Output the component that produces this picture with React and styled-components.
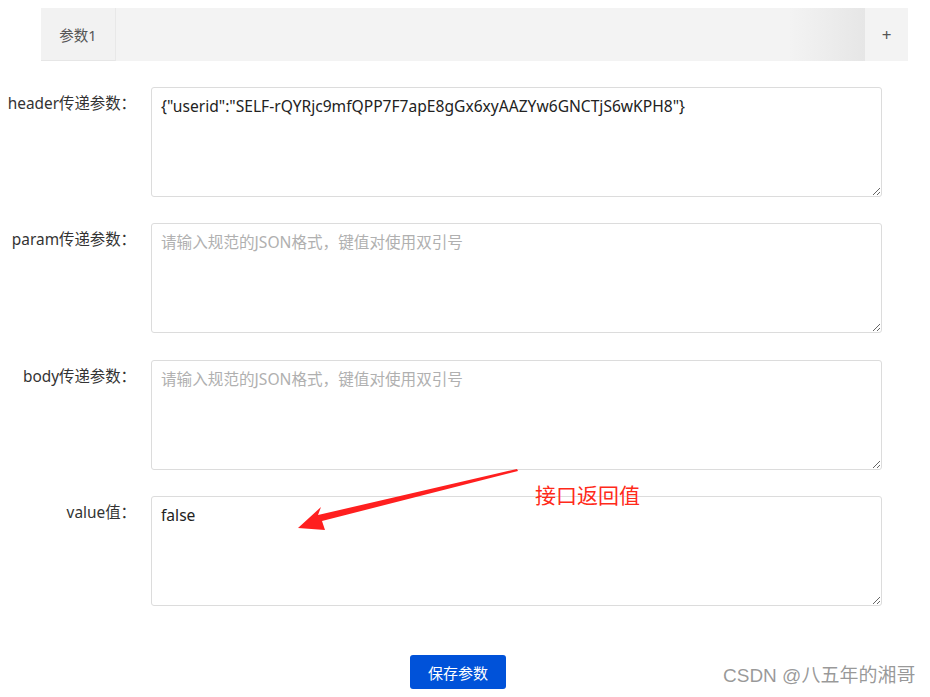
import styled, { createGlobalStyle } from 'styled-components';

const GlobalStyle = createGlobalStyle`
  body {
    margin: 0;
    background: #fff;
    font-family: "Noto Sans", "Noto Sans CJK SC", sans-serif;
  }
`;

const rows = [
  {
    label: 'header传递参数：',
    value: '{"userid":"SELF-rQYRjc9mfQPP7F7apE8gGx6xyAAZYw6GNCTjS6wKPH8"}',
  },
  { label: 'param传递参数：', value: '' },
  { label: 'body传递参数：', value: '' },
  { label: 'value值：', value: 'false' },
];

export default function App() {
  return (
    <Page>
      <GlobalStyle />
      <TabBar>
        <Tab>参数1</Tab>
        <TabSpace />
        <AddTab>+</AddTab>
      </TabBar>

      <Form>
        {rows.map((row) => (
          <Row key={row.label}>
            <Label>{row.label}</Label>
            <TextArea
              defaultValue={row.value}
              placeholder='请输入规范的JSON格式，键值对使用双引号'
            />
          </Row>
        ))}
        <ButtonWrapper>
          <Button>保存参数</Button>
        </ButtonWrapper>
      </Form>

      {/* annotation drawn over the screenshot */}
      <Arrow width='930' height='697' viewBox='0 0 930 697'>
        <polygon
          points='517,469 318,515 321,507 298,528 325,530 322,521 518,471'
          fill='#ff1f1f'
        />
      </Arrow>
      <Note>接口返回值</Note>
      <Watermark>CSDN @八五年的湘哥</Watermark>
    </Page>
  );
}

const Page = styled.div`
  position: relative;
  width: 930px;
  height: 697px;
  padding-top: 8px;
  box-sizing: border-box;
  overflow: hidden;
`;
const TabBar = styled.div`
  display: flex;
  margin-left: 41px;
  width: 867px;
  height: 53px;
  background: #f3f3f3;
`;
const Tab = styled.div`
  width: 75px;
  display: flex;
  align-items: center;
  justify-content: center;
  font-size: 14.5px;
  color: #555;
  background: #f2f2f2;
  border-right: 1px solid #e8e8e8;
  border-bottom: 1px solid #e6e6e6;
  box-sizing: border-box;
`;
const TabSpace = styled.div`
  flex: 1;
  background: linear-gradient(
    to right,
    #f3f3f3 0%,
    #f3f3f3 90%,
    #e6e6e6 100%
  );
`;
const AddTab = styled.div`
  width: 43px;
  display: flex;
  align-items: center;
  justify-content: center;
  font-size: 17px;
  color: #555;
  background: #f3f3f3;
`;
const Form = styled.div`
  display: flex;
  flex-direction: column;
  gap: 26.3px;
  padding-top: 26px;
`;
const Row = styled.div`
  display: flex;
  align-items: flex-start;
`;
const Label = styled.label`
  width: 136px;
  margin-right: 15px;
  padding-top: 6px;
  text-align: right;
  font-size: 15.4px;
  line-height: 22px;
  color: #333;
  white-space: nowrap;
`;
const TextArea = styled.textarea`
  width: 731px;
  height: 110px;
  box-sizing: border-box;
  border: 1px solid #dcdcdc;
  border-radius: 3px;
  padding: 7px 9px;
  font-family: "Noto Sans", "Noto Sans CJK SC", sans-serif;
  font-size: 15.6px;
  line-height: 22px;
  color: #222;
  outline: none;

  &::placeholder {
    color: #b0b0b0;
  }
`;
const ButtonWrapper = styled.div`
  display: flex;
  justify-content: center;
  width: 916px;
  margin-top: 23px;
`;
const Button = styled.button`
  width: 96px;
  height: 34px;
  border: none;
  border-radius: 3px;
  background: #0052d9;
  color: #fff;
  font-family: "Noto Sans CJK SC", sans-serif;
  font-size: 15px;
  cursor: pointer;
`;
const Arrow = styled.svg`
  position: absolute;
  left: 0;
  top: 0;
  pointer-events: none;
`;
const Note = styled.div`
  position: absolute;
  left: 535px;
  top: 481px;
  font-family: "Noto Sans CJK SC", sans-serif;
  font-size: 21px;
  line-height: 26px;
  color: #ff2a1a;
`;
const Watermark = styled.div`
  position: absolute;
  left: 723px;
  top: 663px;
  font-family: "Liberation Sans", "Noto Sans CJK SC", sans-serif;
  font-size: 19px;
  line-height: 26px;
  color: rgba(120, 120, 120, 0.75);
`;
